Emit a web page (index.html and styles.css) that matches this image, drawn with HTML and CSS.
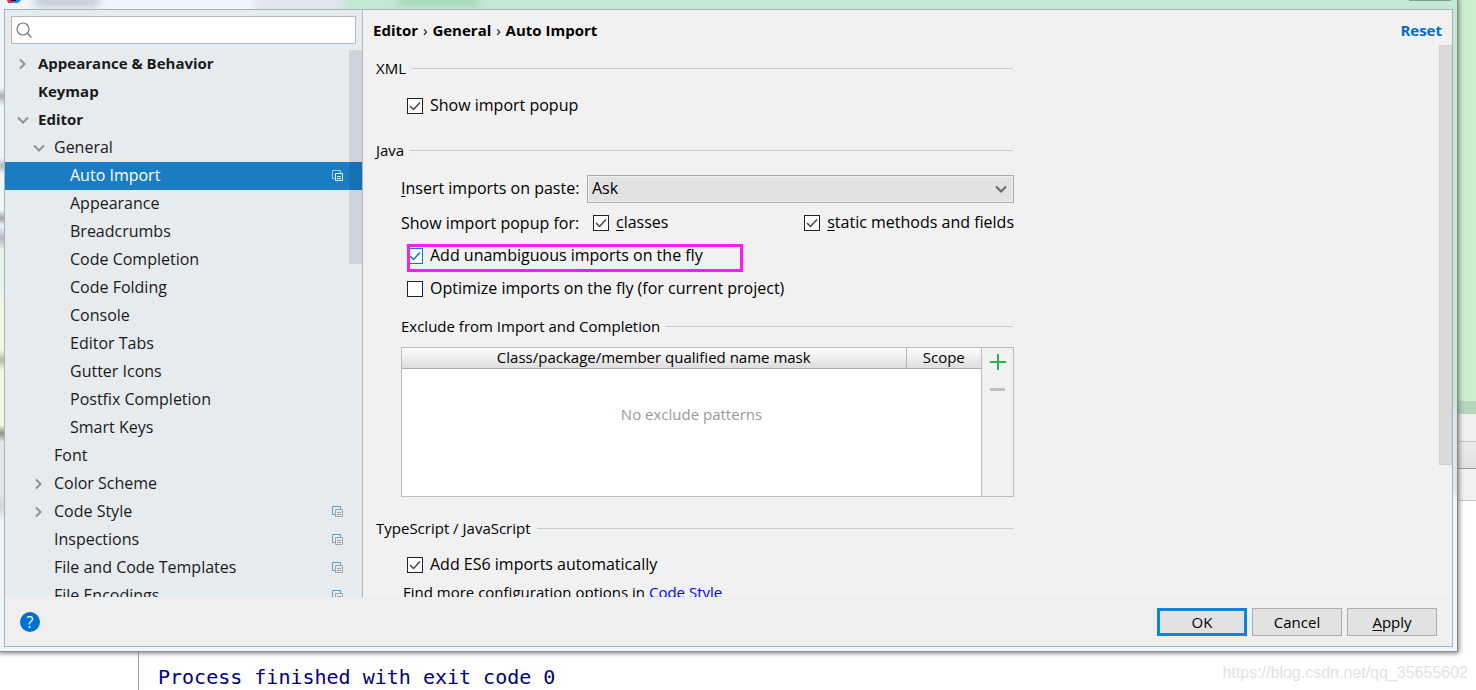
FILE: index.html
```html
<!DOCTYPE html>
<html lang="en">
<head>
<meta charset="utf-8">
<title>Settings</title>
<link rel="stylesheet" href="styles.css">
</head>
<body>
<svg class="defs" aria-hidden="true">
  <symbol id="right" viewBox="0 0 12 12"><path d="M3 1.500 7.500 6 3 10.500" fill="none" stroke="currentColor" stroke-width="2"/></symbol>
  <symbol id="down" viewBox="0 0 12 12"><path d="M1 3.500 6 8.500 11 3.500" fill="none" stroke="currentColor" stroke-width="2"/></symbol>
  <symbol id="copy" viewBox="0 0 12 12"><path class="copy-back" d="M3 8.500H.5V.5H8.500V3" fill="none"/><path class="copy-front" d="M3.500 11V3.500H10.500V10.500H3.500M5 6.500H9M5 8.500H9" fill="none"/></symbol>
</svg>
<div class="desktop">
  <section class="dialog">
    <div class="titlebar">
      <svg class="logo" viewBox="0 0 16 4"><path d="M0 0H7L5 3H1Z" fill="#e8235f"/><path d="M6 0H14L11 3H5Z" fill="#1685f8"/><path d="M4 0H9V1H4Z" fill="#111"/></svg>
      <i class="smudge"></i><i class="smudge green"></i><i class="close-edge"></i>
    </div>
    <div class="client">
      <div class="panes">
        <aside class="sidebar">
          <div class="search">
            <svg viewBox="0 0 16 16"><circle cx="7" cy="7" r="6" /><path d="M11 11 15.500 15.500"/></svg>
            <input type="text" aria-label="Search settings">
          </div>
          <nav class="tree">
            <a class="row l0 bold" href="#"><svg><use href="#right"/></svg><span>Appearance &amp; Behavior</span></a>
            <a class="row l0 bold" href="#"><i></i><span>Keymap</span></a>
            <a class="row l0 bold" href="#"><svg><use href="#down"/></svg><span>Editor</span></a>
            <a class="row l1" href="#"><svg><use href="#down"/></svg><span>General</span></a>
            <a class="row l2 selected" href="#"><i></i><span>Auto Import</span><svg class="copy"><use href="#copy"/></svg></a>
            <a class="row l2" href="#"><i></i><span>Appearance</span></a>
            <a class="row l2" href="#"><i></i><span>Breadcrumbs</span></a>
            <a class="row l2" href="#"><i></i><span>Code Completion</span></a>
            <a class="row l2" href="#"><i></i><span>Code Folding</span></a>
            <a class="row l2" href="#"><i></i><span>Console</span></a>
            <a class="row l2" href="#"><i></i><span>Editor Tabs</span></a>
            <a class="row l2" href="#"><i></i><span>Gutter Icons</span></a>
            <a class="row l2" href="#"><i></i><span>Postfix Completion</span></a>
            <a class="row l2" href="#"><i></i><span>Smart Keys</span></a>
            <a class="row l1" href="#"><i></i><span>Font</span></a>
            <a class="row l1" href="#"><svg><use href="#right"/></svg><span>Color Scheme</span></a>
            <a class="row l1" href="#"><svg><use href="#right"/></svg><span>Code Style</span><svg class="copy"><use href="#copy"/></svg></a>
            <a class="row l1" href="#"><i></i><span>Inspections</span><svg class="copy"><use href="#copy"/></svg></a>
            <a class="row l1" href="#"><i></i><span>File and Code Templates</span><svg class="copy"><use href="#copy"/></svg></a>
            <a class="row l1" href="#"><i></i><span>File Encodings</span><svg class="copy"><use href="#copy"/></svg></a>
            <div class="tree-thumb"></div>
          </nav>
        </aside>
        <main class="content">
          <header class="crumbs"><h1>Editor <span>›</span> General <span>›</span> Auto Import</h1><button class="reset" type="button">Reset</button></header>
          <div class="scroll">
            <div class="form">
              <h2 class="group">XML</h2>
              <label class="check xml-check"><input type="checkbox" checked><span>Show import popup</span></label>
              <h2 class="group">Java</h2>
              <div class="java">
                <div class="line paste"><label for="paste"><u>I</u>nsert imports on paste:</label>
                  <span class="select"><select id="paste"><option>Ask</option></select><svg><use href="#down"/></svg></span></div>
                <div class="line popup"><span class="caption">Show import popup for:</span><label class="check"><input type="checkbox" checked><span><u>c</u>lasses</span></label><label class="check static"><input type="checkbox" checked><span><u>s</u>tatic methods and fields</span></label></div>
                <label class="check fly"><input type="checkbox" checked class="focus"><span>Add unambiguous imports on the fly</span><i class="marker"></i></label>
                <label class="check optimize"><input type="checkbox"><span>Optimize imports on the fly (for current project)</span></label>
                <h3 class="group sub">Exclude from Import and Completion</h3>
                <div class="exclude">
                  <div class="grid">
                    <table><thead><tr><th>Class/package/member qualified name mask</th><th>Scope</th></tr></thead></table>
                    <p>No exclude patterns</p>
                  </div>
                  <div class="tools">
                    <button type="button" aria-label="Add"><svg viewBox="0 0 16 16"><path d="M8 0V16M0 8H16" stroke="#2bb24c" stroke-width="2"/></svg></button>
                    <button type="button" aria-label="Remove"><svg viewBox="0 0 16 16"><path d="M0 7.500H15" stroke="#c0c0c0" stroke-width="3"/></svg></button>
                  </div>
                </div>
              </div>
              <h2 class="group">TypeScript / JavaScript</h2>
              <label class="check es6"><input type="checkbox" checked><span>Add ES6 imports automatically</span></label>
              <p class="more">Find more configuration options in <a href="#">Code Style</a></p>
            </div>
            <div class="thumb"></div>
          </div>
        </main>
      </div>
      <footer class="footer">
        <button class="help" type="button" aria-label="Help">?</button>
        <button class="btn primary" type="button">OK</button>
        <button class="btn" type="button">Cancel</button>
        <button class="btn" type="button"><u>A</u>pply</button>
      </footer>
    </div>
  </section>
  <div class="ide-edge"><div class="edge-editor"></div><div class="edge-bar"></div><div class="edge-tabs"></div><div class="edge-head"></div><div class="edge-tools"></div></div>
  <div class="console"><pre>Process finished with exit code 0</pre><span class="watermark">https://blog.csdn.net/qq_35655602</span></div>
</div>
</body>
</html>
```
FILE: styles.css
```css
* { box-sizing: border-box; }
body { margin: 0; background: #fff; color: #000; font: 16px/20px "Open Sans", "Noto Sans", sans-serif; }
h1, h2, h3, p, pre { margin: 0; font-weight: 400; font-size: 16px; }
button, input, select { font: inherit; color: inherit; margin: 0; }
u { text-underline-offset: 2px; }
.defs { position: absolute; width: 0; height: 0; }
.desktop { display: grid; grid-template: minmax(0, 1fr) 38px / minmax(0, 1fr) 18px; height: 100vh; }

.dialog { position: relative; display: flex; flex-direction: column; padding: 0 4px 4px; border-right: 1px solid #7f8c86; border-bottom: 1px solid #8c8f92; background: linear-gradient(#c3e8d4 0 400px, #dfe5f0 415px 490px, #eff6fd 500px) right / 50% 100% no-repeat, linear-gradient(#eef5fc 0 88px, #a9adb5 96px, #eef5fc 106px 158px, #b4b8c0 166px, #eef8fc 174px 210px, #9fa5aa 218px, #eef5fc 226px, #b3b6c6 238px, #e6f3ea 250px 290px, #f3f7e6 305px 350px, #b5b9a8 360px, #f3f7e6 370px 425px, #8f9484 433px, #e1e5ec 442px 495px, #cfd2d9 505px, #eff6fd 522px); box-shadow: 0 0 5px 1px #777; }
.titlebar { display: flex; height: 9px; margin: 0 -4px; padding-left: 7px; overflow: hidden; background: linear-gradient(90deg, #eef5fd 0 17%, #e1e6ef 18% 23%, #c3e8d4 24%); }
.logo { width: 16px; height: 4px; }
.smudge { width: 64px; height: 4px; margin-left: 12px; background: #8a909c; filter: blur(4px); }
.green { width: 80px; margin-left: 300px; background: #7cc596; }
.close-edge { width: 42px; height: 1px; margin: 0 6px 0 auto; background: #7fa08d; }
.client { flex: 1; min-height: 0; display: flex; flex-direction: column; border: 1px solid #a8b3b5; background: #f1f1f1; }
.panes { flex: 1; min-height: 0; display: flex; }

.sidebar { flex: 0 0 358px; display: flex; flex-direction: column; overflow: hidden; border-right: 1px solid #b4b8bb; background: #e6ebef; color: #1a1a1a; }
.search { flex: none; display: flex; align-items: center; gap: 6px; height: 28px; margin: 6px; padding-left: 4px; border: 1px solid #b5b9bd; background: #fff; }
.search svg { width: 16px; height: 16px; fill: none; stroke: #777; stroke-width: 1.2; }
.search input { flex: 1; min-width: 0; border: 0; outline: 0; background: none; }
.tree { position: relative; flex: 1; min-height: 0; overflow: hidden; }
.row { --back: #5d9cc7; --front: #a2a5a8; display: flex; align-items: center; height: 28px; padding-right: 18px; color: inherit; text-decoration: none; }
.row svg, .row i { flex: none; width: 12px; height: 12px; margin-right: 9px; color: #8e9296; }
.row span { flex: 1; padding-bottom: 2px; }
.row .copy { margin: 0; }
.copy-back { stroke: var(--back); }
.copy-front { stroke: var(--front); }
.l0 { padding-left: 12px; }
.l1 { padding-left: 28px; }
.l2 { padding-left: 44px; }
.bold { font-size: 15px; font-weight: 700; }
.selected { --back: #a8d0ec; --front: #e8f0f6; background: #1a7dc4; color: #fff; }
.tree-thumb { position: absolute; top: 0; right: 0; width: 13px; height: 214px; background: rgba(0, 20, 40, .1); }

.content { flex: 1; min-width: 0; display: flex; flex-direction: column; }
.crumbs { flex: none; display: flex; justify-content: space-between; align-items: center; height: 35px; padding: 4px 10px 0 10px; }
.crumbs h1, .reset { font-size: 15px; font-weight: 700; }
.crumbs span { margin: 0 1px; font-weight: 400; }
.reset { padding: 0; border: 0; background: none; color: #006dcc; }
.scroll { position: relative; flex: 1; min-height: 0; overflow: hidden; }
.thumb { position: absolute; top: 0; right: 0; width: 13px; height: 420px; background: #dadada; border: 1px solid #d2d2d2; }
.form { width: 651px; padding: 13px 0 0 13px; }
.group { display: flex; align-items: center; gap: 6px; height: 20px; margin-right: 1px; font-size: 15px; }
.group::after { content: ""; flex: 1; height: 1px; background: #cbcbcb; }
.check { display: flex; align-items: center; gap: 7px; height: 20px; }
.check span, .paste label { padding-bottom: 2px; }
.check input { appearance: none; flex: none; width: 16px; height: 16px; border: 1px solid #222; background: #fff; }
.check input:checked { background: #fff url("data:image/svg+xml,%3Csvg xmlns='http://www.w3.org/2000/svg' viewBox='0 0 14 14'%3E%3Cpath d='M2 7 5.500 10.500 12 3.500' fill='none' stroke='%23444' stroke-width='1.500'/%3E%3C/svg%3E"); }
.check input.focus { border-color: #0078d7; background-image: url("data:image/svg+xml,%3Csvg xmlns='http://www.w3.org/2000/svg' viewBox='0 0 14 14'%3E%3Cpath d='M2 7 5.500 10.500 12 3.500' fill='none' stroke='%230078d7' stroke-width='1.500'/%3E%3C/svg%3E"); }
.xml-check { margin: 18px 0 24px 31px; }
.java { padding: 15px 0 0 25px; }
.line { display: flex; align-items: center; }
.paste { height: 28px; }
.paste label { flex: none; width: 186px; }
.select { position: relative; flex: 1; height: 28px; }
.select select { appearance: none; width: 100%; height: 28px; padding: 0 4px 2px; border: 1px solid #adadad; border-radius: 0; background: #e2e2e2; box-shadow: inset 0 0 0 1px #efefef; }
.select svg { position: absolute; top: 8px; right: 7px; width: 12px; height: 12px; color: #666; pointer-events: none; }
.popup { height: 20px; margin-top: 10px; }
.caption { flex: none; width: 192px; }
.static { margin-left: auto; }
.fly { position: relative; margin: 13px 0 0 6px; }
.marker { position: absolute; left: 0; top: -2px; width: 336px; height: 28px; border: 3px solid #f81cf0; pointer-events: none; }
.optimize { margin: 13px 0 17px 6px; }
.sub { margin-bottom: 11px; }
.exclude { display: flex; height: 150px; border: 1px solid #bdbdbd; }
.grid { flex: 1; background: #fff; text-align: center; }
.grid table { width: 100%; border-collapse: collapse; table-layout: fixed; }
.grid th { height: 20px; padding: 0; font-size: 15px; font-weight: 400; line-height: 19px; border-bottom: 1px solid #adadad; background: linear-gradient(#fdfdfd, #dedede); }
.grid th + th { width: 75px; border-left: 1px solid #b5b5b5; }
.grid p { padding-top: 35px; color: #999; font-size: 15px; }
.tools { flex: 0 0 32px; border-left: 1px solid #bdbdbd; }
.tools button { display: block; height: 28px; width: 31px; padding: 0; border: 0; background: none; }
.tools svg { display: block; width: 16px; height: 16px; margin: auto; }
.java + .group { margin-top: 21px; }
.es6 { margin: 17px 0 7px 31px; }
.more { padding-left: 27px; font-size: 15px; }
.more a { color: #00f; text-decoration: none; }

.footer { flex: none; display: flex; align-items: center; gap: 5px; height: 49px; padding: 0 15px; background: #efefef; }
.help { width: 20px; height: 20px; margin-right: auto; padding: 0; border: 0; border-radius: 50%; background: #0070d2; color: #fff; line-height: 20px; }
.btn { width: 90px; height: 28px; padding: 0; border: 1px solid #adadad; background: #e2e2e2; font-size: 15px; }
.primary { border: 3px solid #0886e0; }

.ide-edge { display: flex; flex-direction: column; }
.edge-editor { height: 401px; background: #cbefcf; }
.edge-bar { height: 13px; background: #b3d7b8; }
.edge-tabs { height: 28px; background: #f0f0f0; border-bottom: 1px solid #c4c4c4; }
.edge-head { height: 27px; background: linear-gradient(#ececec, #e0e0e0); border-bottom: 1px solid #999; }
.edge-tools { height: 32px; background: #f2f2f2; border-bottom: 1px solid #c4c4c4; }
.console { grid-column: 1 / -1; display: flex; justify-content: space-between; align-items: center; margin-left: 138px; padding: 11px 8px 0 19px; border-left: 1px solid #9aa59c; }
.console pre { color: #000080; font: 20px/24px "DejaVu Sans Mono", monospace; }
.watermark { color: #e2e2e2; font: 16px/20px "Liberation Sans", sans-serif; padding-bottom: 8px; }
```
